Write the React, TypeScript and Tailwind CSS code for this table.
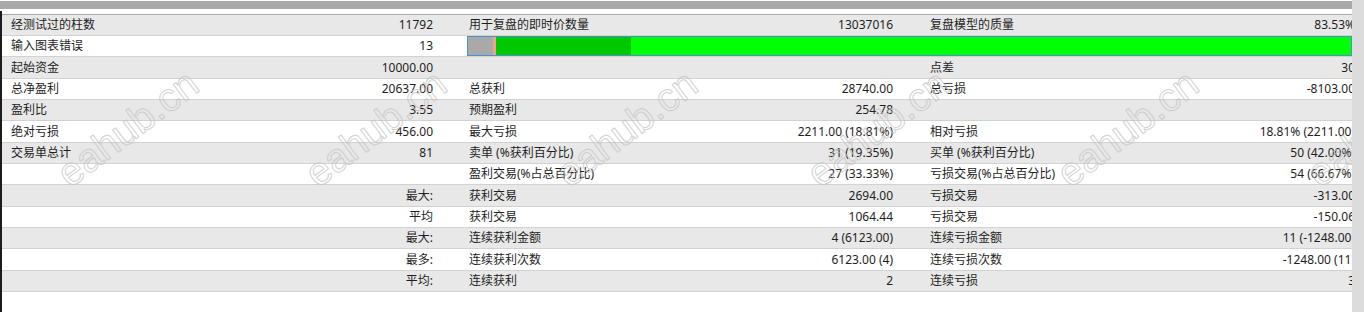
import React from "react";

type Row = {
  l1: string;
  v1: string;
  l2: string;
  v2: string;
  l3: string;
  v3: string;
  bar?: boolean;
};

const rows: Row[] = [
  { l1: "经测试过的柱数", v1: "11792", l2: "用于复盘的即时价数量", v2: "13037016", l3: "复盘模型的质量", v3: "83.53%" },
  { l1: "输入图表错误", v1: "13", l2: "", v2: "", l3: "", v3: "", bar: true },
  { l1: "起始资金", v1: "10000.00", l2: "", v2: "", l3: "点差", v3: "30" },
  { l1: "总净盈利", v1: "20637.00", l2: "总获利", v2: "28740.00", l3: "总亏损", v3: "-8103.00" },
  { l1: "盈利比", v1: "3.55", l2: "预期盈利", v2: "254.78", l3: "", v3: "" },
  { l1: "绝对亏损", v1: "456.00", l2: "最大亏损", v2: "2211.00 (18.81%)", l3: "相对亏损", v3: "18.81% (2211.00)" },
  { l1: "交易单总计", v1: "81", l2: "卖单 (%获利百分比)", v2: "31 (19.35%)", l3: "买单 (%获利百分比)", v3: "50 (42.00%)" },
  { l1: "", v1: "", l2: "盈利交易(%占总百分比)", v2: "27 (33.33%)", l3: "亏损交易(%占总百分比)", v3: "54 (66.67%)" },
  { l1: "", v1: "最大:", l2: "获利交易", v2: "2694.00", l3: "亏损交易", v3: "-313.00" },
  { l1: "", v1: "平均", l2: "获利交易", v2: "1064.44", l3: "亏损交易", v3: "-150.06" },
  { l1: "", v1: "最大:", l2: "连续获利金额", v2: "4 (6123.00)", l3: "连续亏损金额", v3: "11 (-1248.00)" },
  { l1: "", v1: "最多:", l2: "连续获利次数", v2: "6123.00 (4)", l3: "连续亏损次数", v3: "-1248.00 (11)" },
  { l1: "", v1: "平均:", l2: "连续获利", v2: "2", l3: "连续亏损", v3: "3" },
];

const heights = ["h-[21px]", "h-[21px]", "h-[22px]"];

const watermarks = [
  "left-[45px]",
  "left-[293px]",
  "left-[544px]",
  "left-[795px]",
  "left-[1045px]",
  "left-[1295px]",
];

function ProgressBar() {
  return (
    <div className="flex-1 flex h-[20px] border border-[#4a90d9] overflow-hidden">
      <div className="w-[25px] bg-[#a9a9a9]" />
      <div className="w-[3px] bg-[#f4a097]" />
      <div className="w-[135px] bg-[#00c800]" />
      <div className="flex-1 bg-[#00ff00]" />
    </div>
  );
}

export default function App() {
  return (
    <div className="w-[1364px] h-[312px] bg-white flex overflow-hidden text-[12px] text-[#1e1e1e] [font-family:'Noto_Sans','Noto_Sans_CJK_SC',sans-serif]">
      <div className="w-[1352px] flex flex-col relative overflow-hidden">
        <div className="h-[1px] bg-white" />
        <div className="h-[8px] bg-[#a9a9a9]" />
        <div className="h-[2px] bg-white" />
        <div className="flex-1 flex flex-col border-l-2 border-[#1c1c1c]">
          <div className="h-[3px] bg-white" />
          <div className="h-[1px] bg-[#a8a8a8]" />
          {rows.map((r, i) => (
            <div
              key={i}
              className={`${heights[i % 3]} flex items-center border-b border-[#d2d2d2] ${
                i % 2 === 0 ? "bg-[#e8e8e8]" : "bg-white"
              }`}
            >
              <div className="w-[462px] shrink-0 flex items-center pl-[9px] pr-[31px]">
                <span className="whitespace-nowrap">{r.l1}</span>
                <span className="ml-auto whitespace-nowrap">{r.v1}</span>
              </div>
              {r.bar ? (
                <div className="flex-1 flex items-center pl-[3px] h-full">
                  <ProgressBar />
                </div>
              ) : (
                <>
                  <div className="w-[462px] shrink-0 flex items-center pl-[5px] pr-[33px]">
                    <span className="whitespace-nowrap">{r.l2}</span>
                    <span className="ml-auto whitespace-nowrap">{r.v2}</span>
                  </div>
                  <div className="w-[462px] shrink-0 flex items-center pl-[4px] pr-[33px]">
                    <span className="whitespace-nowrap">{r.l3}</span>
                    <span className="ml-auto whitespace-nowrap">{r.v3}</span>
                  </div>
                </>
              )}
            </div>
          ))}
          <div className="flex-1 bg-white" />
        </div>
        {watermarks.map((pos, i) => (
          <span
            key={i}
            className={`absolute ${pos} top-[108px] pointer-events-none select-none whitespace-nowrap text-[40px] leading-none text-transparent [-webkit-text-stroke:1px_#c4c4c4] opacity-75 -rotate-[37deg] [font-family:'Liberation_Sans',sans-serif]`}
          >
            eahub.cn
          </span>
        ))}
      </div>
      <div className="w-[12px] bg-[#dcdcdc]" />
    </div>
  );
}
